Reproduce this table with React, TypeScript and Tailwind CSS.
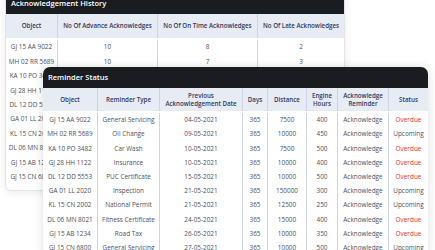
import React from "react";

const objects = [
  "GJ 15 AA 9022",
  "MH 02 RR 5689",
  "KA 10 PO 3482",
  "GJ 28 HH 1122",
  "DL 12 DD 5553",
  "GA 01 LL 2020",
  "KL 15 CN 2002",
  "DL 06 MN 8021",
  "GJ 15 AB 1234",
  "GJ 15 CN 6800",
];

const history = [
  [10, 8, 2],
  [10, 7, 3],
  [12, 6, 4],
  [9, 8, 3],
  [11, 7, 2],
  [10, 9, 1],
  [8, 8, 4],
  [12, 7, 1],
  [10, 6, 4],
  [9, 9, 2],
];

const reminders = [
  ["General Servicing", "04-05-2021", "7500", "400", "Overdue"],
  ["Oil Change", "09-05-2021", "10000", "450", "Upcoming"],
  ["Car Wash", "10-05-2021", "7500", "500", "Overdue"],
  ["Insurance", "10-05-2021", "10000", "400", "Overdue"],
  ["PUC Certificate", "15-05-2021", "10000", "500", "Overdue"],
  ["Inspection", "21-05-2021", "150000", "300", "Upcoming"],
  ["National Permit", "21-05-2021", "12500", "250", "Upcoming"],
  ["Fitness Certificate", "24-05-2021", "15000", "400", "Overdue"],
  ["Road Tax", "26-05-2021", "10000", "350", "Overdue"],
  ["General Servicing", "27-05-2021", "10000", "500", "Upcoming"],
];

const cell = "flex items-center justify-center border-r border-[#cdd3e6] last:border-r-0";

export default function App() {
  return (
    <div className="relative h-[250px] w-[435px] overflow-hidden bg-white font-['Open_Sans',sans-serif]">
      {/* Acknowledgement History */}
      <div className="ml-[5px] mt-[-8px] w-[340px] overflow-hidden rounded-[6px] border border-[#e2e4ea] bg-white shadow-[0_2px_8px_rgba(0,0,0,0.08)]">
        <div className="flex h-[21px] items-center bg-[#1b1c1f] px-[5px] text-[7.5px] font-semibold text-white">
          Acknowledgement History
        </div>
        <div className="grid h-[24px] grid-cols-[52px_100px_100px_86px] bg-[#e7ebf4] text-[6.2px] font-semibold text-[#33395a]">
          <div className={cell}>Object</div>
          <div className={cell}>No Of Advance Acknowledges</div>
          <div className={cell}>No Of On Time Acknowledges</div>
          <div className={cell}>No Of Late Acknowledges</div>
        </div>
        <div className="grid grid-cols-[52px_100px_100px_86px] pb-[6px] pt-[2px] text-[6.4px] text-[#4b5060]">
          <div className="flex flex-col border-r border-[#cdd3e6]">
            {objects.map((o) => (
              <div key={o} className="flex h-[14.4px] items-center justify-center">{o}</div>
            ))}
          </div>
          {[0, 1, 2].map((c) => (
            <div key={c} className="flex flex-col border-r border-[#cdd3e6] last:border-r-0">
              {history.map((r, i) => (
                <div key={i} className="flex h-[14.4px] items-center justify-center">{r[c]}</div>
              ))}
            </div>
          ))}
        </div>
      </div>

      {/* Reminder Status */}
      <div className="absolute left-[43px] top-[67px] w-[385px] overflow-hidden rounded-t-[7px] bg-white shadow-[0_0_10px_rgba(0,0,0,0.14)]">
        <div className="flex h-[21px] items-center bg-[#1b1c1f] px-[5px] text-[7.5px] font-semibold text-white">
          Reminder Status
        </div>
        <div className="grid h-[23px] grid-cols-[55px_62px_83px_25px_39px_31px_51px_39px] bg-[#e7ebf4] text-center text-[6.2px] font-semibold leading-[8px] text-[#33395a]">
          <div className={cell}>Object</div>
          <div className={cell}>Reminder Type</div>
          <div className={cell}>Previous<br />Acknowledgement Date</div>
          <div className={cell}>Days</div>
          <div className={cell}>Distance</div>
          <div className={cell}>Engine<br />Hours</div>
          <div className={cell}>Acknowledge<br />Reminder</div>
          <div className={cell}>Status</div>
        </div>
        <div className="flex flex-col pt-[2px] text-[6.4px] text-[#4b5060]">
          {reminders.map((r, i) => (
            <div key={i} className="grid h-[14.2px] grid-cols-[55px_62px_83px_25px_39px_31px_51px_39px]">
              <div className={cell}>{objects[i]}</div>
              <div className={cell}>{r[0]}</div>
              <div className={cell}>{r[1]}</div>
              <div className={cell}>365</div>
              <div className={cell}>{r[2]}</div>
              <div className={cell}>{r[3]}</div>
              <div className={cell}>Acknowledge</div>
              <div className={`${cell} ${r[4] === "Overdue" ? "text-[#f42a2a]" : ""}`}>{r[4]}</div>
            </div>
          ))}
        </div>
      </div>
    </div>
  );
}
